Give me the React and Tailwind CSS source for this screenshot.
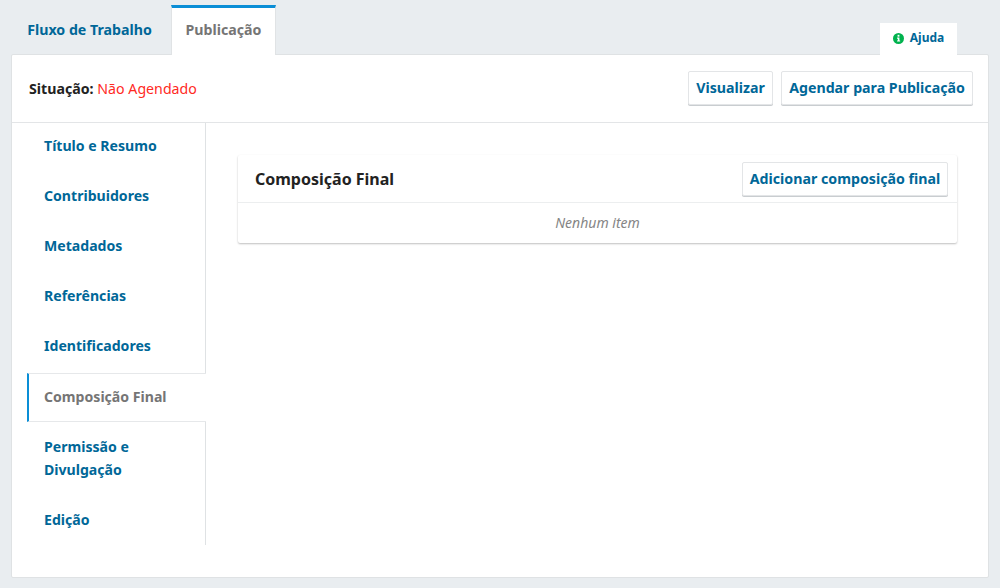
const font = "font-['Noto_Sans',sans-serif]";

const navItems = [
  { label: "Título e Resumo", pad: "pt-[11px] pb-[16px]" },
  { label: "Contribuidores", pad: "pt-[11px] pb-[16px]" },
  { label: "Metadados", pad: "pt-[11px] pb-[16px]" },
  { label: "Referências", pad: "pt-[11px] pb-[16px]" },
  { label: "Identificadores", pad: "pt-[11px] pb-[16px]" },
  { label: "Composição Final", active: true },
  { label: "Permissão e Divulgação", pad: "pt-[13px] pb-[14px]" },
  { label: "Edição", pad: "pt-[13px] pb-[14px]" },
];

function Button({ children, className = "" }) {
  return (
    <button className={`h-[34px] rounded-[2px] border border-[#e3e5e7] bg-white text-[14.2px] font-bold text-[#006798] shadow-[0_1px_0_#c9cdd0] ${className}`}>
      {children}
    </button>
  );
}

function InfoIcon() {
  return (
    <svg width="11" height="11" viewBox="0 0 12 12">
      <circle cx="6" cy="6" r="6" fill="#00b24e" />
      <rect x="5" y="2" width="2" height="2" fill="#fff" />
      <path d="M4.4 5h2.6v3.2h.8V9.4H4.4V8.2h.9V6.2h-.9z" fill="#fff" />
    </svg>
  );
}

function SideNav() {
  return (
    <div className="w-[194px] shrink-0 self-start">
      {navItems.map((item) => {
        if (item.active) {
          return (
            <div
              key={item.label}
              className="ml-[15px] h-[49px] w-[179px] border-y border-[#e6e8ea] border-l-2 border-l-[#0a8ed6] bg-white pl-[15px] text-[14.1px] font-bold leading-[45px] text-[#757575]"
            >
              {item.label}
            </div>
          );
        }
        return (
          <div key={item.label} className={`border-r border-[#dfe2e4] pl-[32px] pr-[40px] text-[14.1px] font-bold leading-[23px] text-[#006798] ${item.pad}`}>
            {item.label}
          </div>
        );
      })}
    </div>
  );
}

export default function App() {
  return (
    <div className={`${font} h-[588px] w-[1000px] overflow-hidden bg-[#e9edf0]`}>
      <div className="flex h-[54px] items-end pl-[12px]">
        <div className="flex h-[49px] w-[159px] items-center justify-center pr-[4px] text-[14.2px] font-bold text-[#006798]">
          Fluxo de Trabalho
        </div>
        <div className="relative z-10 -mb-px flex h-[50px] w-[105px] items-center justify-center border-x border-[#e0e3e5] border-t-[3px] border-t-[#0a8ed6] bg-white pb-[3px] text-[14.2px] font-bold text-[#757575]">
          Publicação
        </div>
        <div className="relative z-10 -mb-px ml-auto mr-[43px] flex h-[32px] w-[77px] items-center justify-center gap-[6px] bg-white pb-[2px] text-[12px] font-bold text-[#006798]">
          <InfoIcon />
          Ajuda
        </div>
      </div>

      <div className="ml-[11px] flex h-[524px] w-[978px] flex-col rounded-[2px] border border-[#dfe2e4] bg-white">
        <div className="flex h-[68px] shrink-0 items-center justify-between border-b border-[#e3e5e7] pl-[17px] pr-[15px]">
          <div className="text-[14.2px] text-[#ff2a1f]">
            <span className="font-bold text-[#222]">Situação:</span> Não Agendado
          </div>
          <div className="flex gap-[8px] pb-[2px]">
            <Button className="w-[85px]">Visualizar</Button>
            <Button className="w-[192px]">Agendar para Publicação</Button>
          </div>
        </div>

        <div className="flex min-h-0 flex-1">
          <SideNav />
          <div className="flex-1 pl-[32px] pr-[31px] pt-[32px]">
            <div className="rounded-[2px] bg-white shadow-[0_1px_2px_rgba(0,0,0,0.25)]">
              <div className="flex h-[48px] items-center justify-between border-b border-[#eceeef] pl-[17px] pr-[9px]">
                <div className="pt-[1px] text-[16px] font-bold text-[#222]">Composição Final</div>
                <Button className="w-[206px]">Adicionar composição final</Button>
              </div>
              <div className="flex h-[40px] items-center justify-center pb-[2px] text-[14px] italic text-[#858585]">
                Nenhum item
              </div>
            </div>
          </div>
        </div>
      </div>
    </div>
  );
}
